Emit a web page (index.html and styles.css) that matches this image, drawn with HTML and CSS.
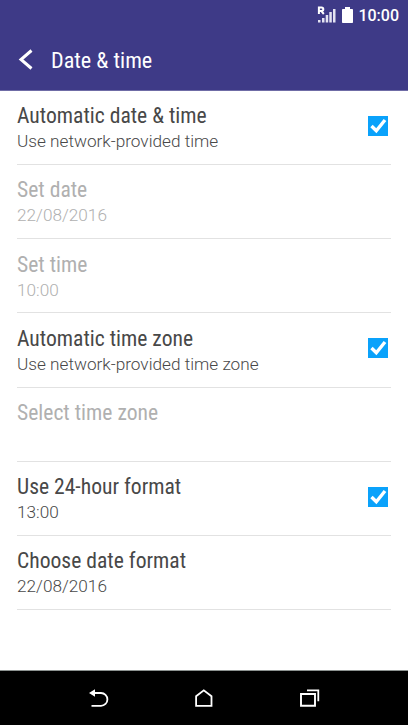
FILE: index.html
```html
<!DOCTYPE html>
<html lang="en">
<head>
    <meta charset="UTF-8" />
    <meta name="viewport" content="width=device-width, initial-scale=1.0"/>
    <title>Date &amp; time</title>
    <link rel="stylesheet" href="styles.css">
</head>
<body>
    <div class="screen">
        <div class="status-bar">
            <svg class="signal-icon" width="19" height="18" viewBox="0 0 19 18">
                <path d="M1.9 8V1.500H4.500Q6.300 1.500 6.300 3.200T4.500 4.900H1.9M4.200 4.900L6.800 8" fill="none" stroke="#fff" stroke-width="2"/>
                <path d="M1 14h2.500v2.500H1zM5 12h2.500v4.500H5zM8.700 9h2.500v7.500H8.700zM12.300 6h2.500v10.500h-2.500zM16 3h2.500v13.500H16z" fill="#e4e3f2"/>
            </svg>
            <svg class="battery-icon" width="11" height="18" viewBox="0 0 11 18">
                <path d="M3 1h5v2h2.200a.8.8 0 0 1 .8.8v12.400a.8.8 0 0 1-.8.8H.8a.8.8 0 0 1-.8-.8V3.800a.8.8 0 0 1 .8-.8H3z" fill="#fff"/>
            </svg>
            <span class="clock">10:00</span>
        </div>
        <div class="header">
            <svg class="back-icon" width="15" height="22" viewBox="0 0 15 22">
                <path d="M13.500 1.500L3 10.500L13.500 19.500" fill="none" stroke="#fff" stroke-width="3"/>
            </svg>
            <h1 class="header-title">Date &amp; time</h1>
        </div>
        <div class="settings">
            <div class="row">
                <div class="row-text">
                    <div class="row-title">Automatic date &amp; time</div>
                    <div class="row-summary">Use network-provided time</div>
                </div>
                <svg class="checkbox" width="20" height="20" viewBox="0 0 20 20">
                    <rect width="20" height="20" fill="#0aa2fb"/>
                    <path d="M3.500 10L8.300 14.800L17 4" fill="none" stroke="#fff" stroke-width="3.400"/>
                </svg>
            </div>
            <div class="row disabled">
                <div class="row-text">
                    <div class="row-title">Set date</div>
                    <div class="row-summary">22/08/2016</div>
                </div>
            </div>
            <div class="row disabled">
                <div class="row-text">
                    <div class="row-title">Set time</div>
                    <div class="row-summary">10:00</div>
                </div>
            </div>
            <div class="row">
                <div class="row-text">
                    <div class="row-title">Automatic time zone</div>
                    <div class="row-summary">Use network-provided time zone</div>
                </div>
                <svg class="checkbox" width="20" height="20" viewBox="0 0 20 20">
                    <rect width="20" height="20" fill="#0aa2fb"/>
                    <path d="M3.500 10L8.300 14.800L17 4" fill="none" stroke="#fff" stroke-width="3.400"/>
                </svg>
            </div>
            <div class="row disabled">
                <div class="row-text">
                    <div class="row-title">Select time zone</div>
                </div>
            </div>
            <div class="row">
                <div class="row-text">
                    <div class="row-title">Use 24-hour format</div>
                    <div class="row-summary">13:00</div>
                </div>
                <svg class="checkbox" width="20" height="20" viewBox="0 0 20 20">
                    <rect width="20" height="20" fill="#0aa2fb"/>
                    <path d="M3.500 10L8.300 14.800L17 4" fill="none" stroke="#fff" stroke-width="3.400"/>
                </svg>
            </div>
            <div class="row">
                <div class="row-text">
                    <div class="row-title">Choose date format</div>
                    <div class="row-summary">22/08/2016</div>
                </div>
            </div>
        </div>
        <div class="nav-bar">
            <svg width="22" height="20" viewBox="0 0 22 20">
                <path d="M7 5H14A6.200 6.200 0 0 1 14 17.800H4.500" fill="none" stroke="#fff" stroke-width="1.800"/>
                <path d="M2 5L8 1.300V8.700z" fill="#fff"/>
            </svg>
            <svg width="22" height="20" viewBox="0 0 22 20">
                <path d="M3.100 17.800V8.300L10.800 2.300L18.500 8.300V17.800z" fill="none" stroke="#fff" stroke-width="1.800"/>
            </svg>
            <svg width="22" height="20" viewBox="0 0 22 20">
                <path d="M2 6H16V17.800H2z" fill="none" stroke="#fff" stroke-width="1.900"/>
                <path d="M8 2.300H19.300V13.300" fill="none" stroke="#fff" stroke-width="1.800"/>
            </svg>
        </div>
    </div>
</body>
</html>
```
FILE: styles.css
```css
* {
    box-sizing: border-box;
}

body {
    margin: 0;
    font-family: Roboto, 'Noto Sans', sans-serif;
    background: #fff;
}

.screen {
    width: 408px;
    height: 725px;
    display: flex;
    flex-direction: column;
    overflow: hidden;
}

.status-bar {
    height: 30px;
    padding: 0 9px 0 0;
    background: #3e3a87;
    color: #fff;
    display: flex;
    align-items: center;
    justify-content: flex-end;
}

.battery-icon {
    margin: 0 5px 1px 6px;
}

.clock {
    font-size: 16px;
    font-weight: 500;
}

.header {
    height: 61px;
    padding-left: 18px;
    background: #3e3a87;
    border-bottom: 1px solid #6f6ca6;
    color: #fff;
    display: flex;
    align-items: center;
}

.back-icon {
    margin-bottom: 1px;
}

.header-title {
    margin: 0 0 1px 18px;
    font-family: 'Roboto Condensed', Roboto, sans-serif;
    font-stretch: 75%;
    font-size: 22.2px;
    line-height: 26px;
    font-weight: 400;
}

.settings {
    flex: 1;
    padding: 0 17px;
}

.row {
    height: 74.17px;
    border-bottom: 1px solid #e2e2e2;
    display: flex;
    justify-content: space-between;
    color: #484848;
}

.row-text {
    padding-top: 12.3px;
}

.row-title {
    font-family: 'Roboto Condensed', Roboto, sans-serif;
    font-stretch: 75%;
    font-size: 21.6px;
    line-height: 26px;
}

.row-summary {
    font-size: 17.2px;
    font-weight: 300;
    line-height: 25px;
}

.disabled {
    color: #b0b0b0;
}

.checkbox {
    margin: 25px 3px 0 0;
}

.nav-bar {
    height: 55px;
    background: #000;
    border-top: 1px solid #8c9290;
    display: flex;
    justify-content: center;
    align-items: center;
    gap: 84px;
}
```
